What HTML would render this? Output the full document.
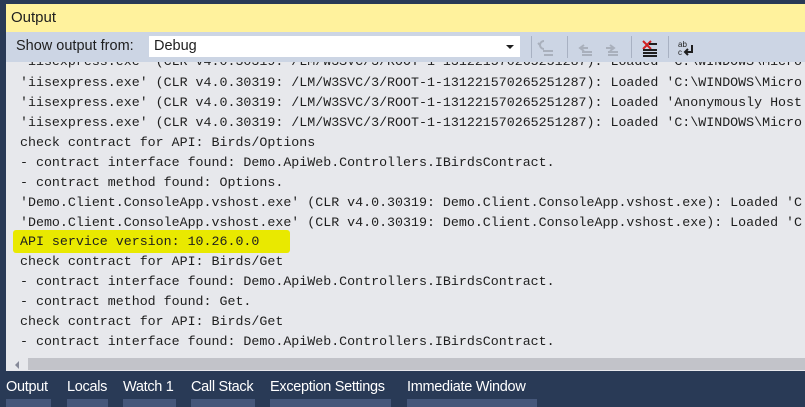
<!DOCTYPE html>
<html><head><meta charset="utf-8"><style>
*{margin:0;padding:0;box-sizing:border-box}
body{width:805px;height:407px;background:#293a56;position:relative;overflow:hidden;font-family:"Liberation Sans",sans-serif}
.title{position:absolute;left:6px;top:4px;width:799px;height:28px;background:#fff29d;font-size:15px;color:#1e1e1e;padding:5px 0 0 5px}
.tb{position:absolute;left:6px;top:32px;width:799px;height:30px;background:#ccd5e4}
.lbl{position:absolute;left:10px;top:6px;font-size:14.5px;color:#1e1e1e}
.combo{position:absolute;left:142px;top:3px;width:373px;height:23px;background:#fff;border:1px solid #ccd5e4;font-size:14.5px;padding:2px 0 0 5px;color:#1e1e1e}
.combo:after{content:"";position:absolute;right:6px;top:9px;border-left:4px solid transparent;border-right:4px solid transparent;border-top:4px solid #1e1e1e}
.sep{position:absolute;top:4px;width:1px;height:22px;background:#a8b1c2}
.txt{position:absolute;left:6px;top:62px;width:799px;height:296px;background:#e7e8ec;overflow:hidden}
.ln{position:absolute;left:14px;font-family:"Liberation Mono",monospace;font-size:13.3px;white-space:pre;color:#1e1e1e;line-height:20px}
.hl{position:absolute;left:7px;top:168px;width:277px;height:23px;background:#e9e900;border-radius:3px}
.sb{position:absolute;left:6px;top:358px;width:799px;height:13px;background:#e7e8ec}
.sb div{position:absolute;left:22px;top:0;right:0;height:12px;background:#c2c3c9}
.sb span{position:absolute;left:9px;top:3px;border-top:4px solid transparent;border-bottom:4px solid transparent;border-right:4px solid #868999}
.tab{position:absolute;top:379px;font-size:14.5px;color:#fff;letter-spacing:-0.3px}
.bar{position:absolute;top:399px;height:8px;background:#45577a}
</style></head><body>
<div class="title">Output</div>
<div class="tb">
<div class="lbl">Show output from:</div>
<div class="combo">Debug</div>
<div class="sep" style="left:525px"></div>
<div class="sep" style="left:561px"></div>
<div class="sep" style="left:625px"></div>
<div class="sep" style="left:662px"></div>
<svg style="position:absolute;left:530px;top:6px" width="170" height="20">
<g stroke="#a9b0bc" stroke-width="2" fill="none">
<path d="M8 3 a4 4 0 1 0 0 8 M4 7 l-2 -2 M13 13h-6 M8 17h9 M10 13h7"/>
<path d="M48 7 l-4 3 l4 3 M44 10h8 M46 14h10 M46 17h10"/>
<path d="M74 7 l4 3 l-4 3 M70 10h8 M72 14h10 M72 17h10"/>
</g>
<path d="M107 3 l8 8 M115 3 l-8 8" stroke="#d02020" stroke-width="2"/>
<path d="M113 6h8 M107 12h14 M107 15h14 M107 18h14" stroke="#1e1e1e" stroke-width="2"/>
<text x="142" y="9" font-size="8" font-family="Liberation Sans" fill="#1e1e1e">ab</text>
<text x="142" y="17" font-size="8" font-family="Liberation Sans" fill="#1e1e1e">c</text>
<path d="M156 7v7h-7 M152 11l-3 3 3 3" stroke="#1e1e1e" stroke-width="2" fill="none"/>
</svg>
</div>
<div class="txt">
<div class="hl"></div>
<div class="ln" style="top:-10px">'iisexpress.exe' (CLR v4.0.30319: /LM/W3SVC/3/ROOT-1-131221570265251287): Loaded 'C:\WINDOWS\Micro</div>
<div class="ln" style="top:11px">'iisexpress.exe' (CLR v4.0.30319: /LM/W3SVC/3/ROOT-1-131221570265251287): Loaded 'C:\WINDOWS\Micro</div>
<div class="ln" style="top:31px">'iisexpress.exe' (CLR v4.0.30319: /LM/W3SVC/3/ROOT-1-131221570265251287): Loaded 'Anonymously Host</div>
<div class="ln" style="top:51px">'iisexpress.exe' (CLR v4.0.30319: /LM/W3SVC/3/ROOT-1-131221570265251287): Loaded 'C:\WINDOWS\Micro</div>
<div class="ln" style="top:71px">check contract for API: Birds/Options</div>
<div class="ln" style="top:91px">- contract interface found: Demo.ApiWeb.Controllers.IBirdsContract.</div>
<div class="ln" style="top:111px">- contract method found: Options.</div>
<div class="ln" style="top:131px">'Demo.Client.ConsoleApp.vshost.exe' (CLR v4.0.30319: Demo.Client.ConsoleApp.vshost.exe): Loaded 'C</div>
<div class="ln" style="top:151px">'Demo.Client.ConsoleApp.vshost.exe' (CLR v4.0.30319: Demo.Client.ConsoleApp.vshost.exe): Loaded 'C</div>
<div class="ln" style="top:170px">API service version: 10.26.0.0</div>
<div class="ln" style="top:190px">check contract for API: Birds/Get</div>
<div class="ln" style="top:210px">- contract interface found: Demo.ApiWeb.Controllers.IBirdsContract.</div>
<div class="ln" style="top:230px">- contract method found: Get.</div>
<div class="ln" style="top:250px">check contract for API: Birds/Get</div>
<div class="ln" style="top:270px">- contract interface found: Demo.ApiWeb.Controllers.IBirdsContract.</div>
</div>
<div class="sb"><span></span><div></div></div>
<div class="tab" style="left:6px">Output</div>
<div class="tab" style="left:67px">Locals</div>
<div class="tab" style="left:123px">Watch 1</div>
<div class="tab" style="left:191px">Call Stack</div>
<div class="tab" style="left:270px">Exception Settings</div>
<div class="tab" style="left:407px">Immediate Window</div>
<div class="bar" style="left:6px;width:45px"></div>
<div class="bar" style="left:67px;width:41px"></div>
<div class="bar" style="left:123px;width:53px"></div>
<div class="bar" style="left:191px;width:64px"></div>
<div class="bar" style="left:270px;width:121px"></div>
<div class="bar" style="left:407px;width:130px"></div>
</body></html>
